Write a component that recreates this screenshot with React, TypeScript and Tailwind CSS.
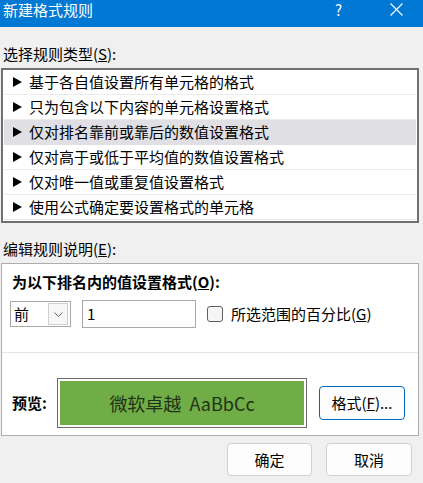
import React from 'react';

const font = { fontFamily: '"Noto Sans CJK SC", "Noto Sans", sans-serif' };

const rules = [
  '基于各自值设置所有单元格的格式',
  '只为包含以下内容的单元格设置格式',
  '仅对排名靠前或靠后的数值设置格式',
  '仅对高于或低于平均值的数值设置格式',
  '仅对唯一值或重复值设置格式',
  '使用公式确定要设置格式的单元格',
];

const Arrow = () => (
  <svg width="9" height="10" viewBox="0 0 9 10" className="shrink-0">
    <polygon points="0,0 9,5 0,10" fill="#000" />
  </svg>
);

const App = () => {
  return (
    <div
      className="w-[423px] h-[483px] bg-[#f0f0f0] flex flex-col text-black overflow-hidden"
      style={font}
    >
      {/* Title bar */}
      <div className="h-[27px] shrink-0 bg-[#0078d4] text-white flex items-start pt-[1px] pl-[3px] pr-[20px]">
        <span className="text-[15px] leading-[17px]">新建格式规则</span>
        <span className="ml-auto text-[15px] leading-[17px] mr-[48px]">?</span>
        <svg width="13" height="13" viewBox="0 0 13 13" className="mt-[2px]">
          <path d="M0.5 0.5 L12.5 12.5 M12.5 0.5 L0.5 12.5" stroke="#fff" strokeWidth="1.1" />
        </svg>
      </div>

      {/* Rule type label */}
      <div className="mt-[17px] pl-[3px] text-[15px] leading-[20px]">
        选择规则类型(<span className="underline">S</span>):
      </div>

      {/* Rule list */}
      <div className="mt-[4px] ml-[1px] w-[418px] border-2 border-[#707070] bg-white py-[0px] px-[1px] pb-[1px]">
        {rules.map((r, i) => (
          <div
            key={r}
            className={
              i === 2
                ? 'h-[25px] flex items-center gap-[7px] pl-[9px] bg-[#dfdfe4] border-b border-[#dfdfe4]'
                : 'h-[25px] flex items-center gap-[7px] pl-[9px] border-b border-[#ebebeb]'
            }
          >
            <Arrow />
            <span className="text-[15px] leading-[20px]">{r}</span>
          </div>
        ))}
      </div>

      {/* Edit description label */}
      <div className="mt-[16px] pl-[3px] text-[15px] leading-[20px]">
        编辑规则说明(<span className="underline">E</span>):
      </div>

      {/* Description panel */}
      <div className="mt-[4px] ml-[1px] w-[418px] h-[173px] border border-[#adadad] bg-white flex flex-col">
        <div className="pt-[8px] pl-[10px] text-[15px] leading-[20px] font-bold">
          为以下排名内的值设置格式(<span className="underline">O</span>):
        </div>

        <div className="mt-[8px] pl-[8px] flex items-center">
          <div className="w-[61px] h-[26px] border border-[#a8a8a8] flex items-center justify-between pl-[3px] pr-[2px]">
            <span className="text-[15px] leading-[20px]">前</span>
            <div className="w-[20px] h-[22px] border border-[#cfcfcf] bg-[#f7f7f7] flex items-center justify-center">
              <svg width="9" height="5" viewBox="0 0 9 5">
                <path d="M0.5 0.5 L4.5 4.5 L8.5 0.5" stroke="#6b6b6b" fill="none" strokeWidth="1" />
              </svg>
            </div>
          </div>
          <div className="ml-[11px] w-[114px] h-[28px] border border-[#a8a8a8] flex items-center pl-[4px]">
            <span className="text-[15px] leading-[20px]">1</span>
          </div>
          <div className="ml-[11px] w-[16px] h-[16px] rounded-[3px] border border-[#5f5f5f] bg-[#f5f5f5]" />
          <span className="ml-[8px] text-[15px] leading-[20px]">
            所选范围的百分比(<span className="underline">G</span>)
          </span>
        </div>

        <div className="mt-[24px] h-px bg-[#e5e5e5]" />

        <div className="mt-[25px] pl-[10px] flex items-center">
          <span className="text-[15px] leading-[20px] font-bold w-[45px]">预览:</span>
          <div className="w-[250px] h-[50px] border border-[#6d6d6d] bg-white p-[2px]">
            <div className="w-full h-full bg-[#70ad47] flex items-center justify-center text-[18px] leading-[22px] text-[#1f3316]">
              微软卓越&nbsp;&nbsp;AaBbCc
            </div>
          </div>
          <button className="ml-[12px] w-[86px] h-[34px] rounded-[4px] border border-[#0067c0] bg-[#fdfdfd] text-[15px] leading-[20px]">
            格式(<span className="underline">F</span>)...
          </button>
        </div>
      </div>

      {/* Footer buttons */}
      <div className="mt-[7px] flex justify-end gap-[14px] pr-[11px]">
        <button className="w-[85px] h-[33px] rounded-[4px] border border-[#d0d0d0] bg-[#fdfdfd] text-[15px] leading-[20px]">
          确定
        </button>
        <button className="w-[86px] h-[33px] rounded-[4px] border border-[#d0d0d0] bg-[#fdfdfd] text-[15px] leading-[20px]">
          取消
        </button>
      </div>
    </div>
  );
};

export default App;
